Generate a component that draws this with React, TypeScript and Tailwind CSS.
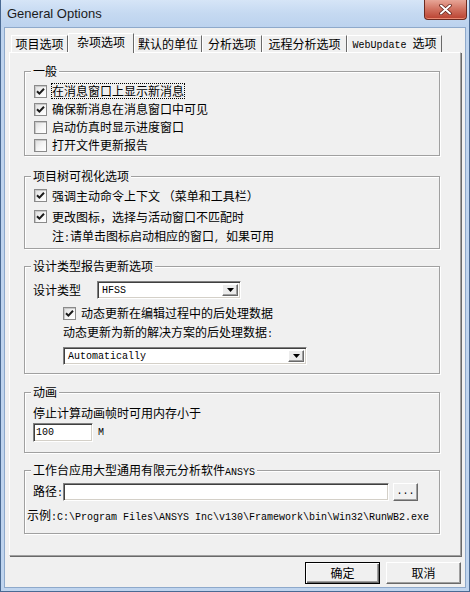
import React from 'react';

const cjk = "[font-family:'Noto_Sans_CJK_SC','Liberation_Sans',sans-serif]";
const mono = "[font-family:'Liberation_Mono',monospace]";

// Classic 13px checkbox
function Check({ checked }: { checked?: boolean }) {
  return (
    <span className="w-[13px] h-[13px] shrink-0 flex items-center justify-center border border-[#8a8a8a] bg-gradient-to-br from-[#dcdcdc] via-[#f4f4f4] to-white shadow-[inset_1px_1px_0_#c8c8c8]">
      {checked && (
        <svg width="9" height="9" viewBox="0 0 9 9">
          <path d="M1 4.2 L3.4 6.6 L8 1.8" stroke="#1a1a1a" strokeWidth="2" fill="none" />
        </svg>
      )}
    </span>
  );
}

function CheckRow({ checked, children, focus }: { checked?: boolean; children: React.ReactNode; focus?: boolean }) {
  return (
    <div className="flex items-center gap-[5px] h-[18px] pl-[9px]">
      <Check checked={checked} />
      <span className={`leading-[14px] ${focus ? 'outline outline-1 outline-dotted outline-black' : ''}`}>{children}</span>
    </div>
  );
}

function Group({ title, className, children }: { title: React.ReactNode; className: string; children: React.ReactNode }) {
  return (
    <div className={`relative ml-[14px] w-[416px] border border-[#a0a0a0] shadow-[inset_1px_1px_0_#fff,1px_1px_0_#fff] ${className}`}>
      <span className="absolute -top-[9px] left-[6px] px-[2px] bg-[#f0f0f0] leading-[16px] whitespace-nowrap">{title}</span>
      {children}
    </div>
  );
}

function DropArrow() {
  return (
    <span className="w-[16px] h-full shrink-0 flex items-center justify-center bg-[#ececec] border-t border-l border-t-white border-l-white border-r border-b border-r-[#696969] border-b-[#696969] shadow-[inset_-1px_-1px_0_#a0a0a0]">
      <svg width="7" height="4" viewBox="0 0 7 4"><path d="M0 0 H7 L3.5 4 Z" fill="#000" /></svg>
    </span>
  );
}

function Combo({ value, className }: { value: string; className: string }) {
  return (
    <div className={`flex items-stretch bg-white border-t border-l border-t-[#808080] border-l-[#808080] border-b border-r border-b-white border-r-white shadow-[inset_1px_1px_0_#404040,inset_-1px_-1px_0_#d4d0c8] p-[2px] ${className}`}>
      <span className={`flex-1 flex items-center pl-[2px] text-[10px] text-black ${mono}`}>{value}</span>
      <DropArrow />
    </div>
  );
}

function Btn({ children, primary }: { children: React.ReactNode; primary?: boolean }) {
  return (
    <button
      type="button"
      className={`w-[75px] h-[22px] flex items-center justify-center bg-[#f0f0f0] text-[12px] leading-none ${
        primary
          ? 'border border-black shadow-[inset_1px_1px_0_#fff,inset_-1px_-1px_0_#696969,inset_-2px_-2px_0_#a0a0a0]'
          : 'border-t border-l border-t-white border-l-white border-r border-b border-r-[#696969] border-b-[#696969] shadow-[inset_-1px_-1px_0_#a0a0a0]'
      }`}
    >
      {children}
    </button>
  );
}

const TABS = [
  { label: '项目选项', w: 'w-[57px]' },
  { label: '杂项选项', w: 'w-[66px]', active: true },
  { label: '默认的单位', w: 'w-[68px]' },
  { label: '分析选项', w: 'w-[60px]' },
  { label: '远程分析选项', w: 'w-[85px]' },
  { label: 'WebUpdate', w: 'w-[95px]', mono: true },
];

export default function App() {
  return (
    <div className={`w-[470px] h-[592px] flex flex-col bg-[#bfd4ee] border-l border-r border-b border-[#4a6a93] text-[12px] text-black ${cjk}`}>
      {/* title bar */}
      <div className="h-[27px] shrink-0 flex justify-between bg-gradient-to-b from-[#d6e5f7] via-[#c5d9f1] to-[#bcd2ee]">
        <span className="pl-[6px] pt-[6px] text-[13px] leading-[16px] text-[#1b1b1b] [font-family:'Liberation_Sans',sans-serif]">General Options</span>
        <div className="mr-[2px] w-[43px] h-[20px] flex items-center justify-center rounded-b-[4px] border border-t-0 border-[#6b2a20] bg-gradient-to-b from-[#e7a597] via-[#d0705f] to-[#b9402f] shadow-[inset_0_-1px_0_#e98a73]">
          <svg width="13" height="11" viewBox="0 0 13 11">
            <path d="M2 1.5 L11 9.5 M11 1.5 L2 9.5" stroke="#5a1c14" strokeWidth="3.4" strokeLinecap="round" />
            <path d="M2 1.5 L11 9.5 M11 1.5 L2 9.5" stroke="#fff" strokeWidth="2" strokeLinecap="round" />
          </svg>
        </div>
      </div>

      {/* client area */}
      <div className="flex-1 mx-[3px] mb-[3px] bg-[#f0f0f0] border border-[#8ea9cb] pt-[5px] px-[4px]">
        {/* tab strip */}
        <div className="h-[19px] flex items-end">
          {TABS.map((t, i) => (
            <div
              key={t.label}
              className={`${t.w} ${i === 0 ? 'ml-[2px]' : ''} flex items-center justify-center bg-[#f0f0f0] border-t border-l border-t-white border-l-white border-r border-r-[#696969] ${
                t.active ? 'h-[20px] -mb-px relative z-10 pb-[3px]' : 'h-[17px]'
              }`}
            >
              {t.mono ? (
                <span className="leading-none whitespace-nowrap">
                  <span className={`text-[10px] ${mono}`}>WebUpdate </span>选项
                </span>
              ) : (
                <span className="leading-none whitespace-nowrap">{t.label}</span>
              )}
            </div>
          ))}
        </div>

        {/* tab panel */}
        <div className="h-[504px] flex flex-col border-t border-l border-t-white border-l-white border-r border-b border-r-[#a0a0a0] border-b-[#a0a0a0] shadow-[1px_1px_0_#696969]">
          <Group title="一般" className="mt-[18px] h-[85px] pt-[10px]">
            <CheckRow checked focus>在消息窗口上显示新消息</CheckRow>
            <CheckRow checked>确保新消息在消息窗口中可见</CheckRow>
            <CheckRow>启动仿真时显示进度窗口</CheckRow>
            <CheckRow>打开文件更新报告</CheckRow>
          </Group>

          <Group title="项目树可视化选项" className="mt-[20px] h-[73px] pt-[8px]">
            <div className="flex items-center gap-[5px] h-[21px] pl-[9px]">
              <Check checked />
              <span className="leading-[14px]">强调主动命令上下文 （菜单和工具栏）</span>
            </div>
            <div className="flex items-center gap-[5px] h-[21px] pl-[9px]">
              <Check checked />
              <span className="leading-[14px]">更改图标，选择与活动窗口不匹配时</span>
            </div>
            <div className="flex items-center h-[21px] pl-[27px]">
              <span className="leading-[14px]">注<span className={`text-[10px] ${mono}`}>:</span>请单击图标启动相应的窗口<span className={`text-[10px] ${mono}`}>, </span>如果可用</span>
            </div>
          </Group>

          <Group title="设计类型报告更新选项" className="mt-[17px] h-[108px] pt-[14px]">
            <div className="flex items-center h-[18px] pl-[8px] gap-[16px]">
              <span className="leading-[14px]">设计类型</span>
              <Combo value="HFSS" className="w-[144px] h-[18px]" />
            </div>
            <div className="mt-[5px] flex items-center gap-[5px] h-[18px] pl-[38px]">
              <Check checked />
              <span className="leading-[14px]">动态更新在编辑过程中的后处理数据</span>
            </div>
            <div className="mt-[2px] flex items-center h-[18px] pl-[38px]">
              <span className="leading-[14px]">动态更新为新的解决方案的后处理数据<span className={`text-[10px] ${mono}`}>:</span></span>
            </div>
            <div className="mt-[5px] pl-[38px]">
              <Combo value="Automatically" className="w-[244px] h-[18px]" />
            </div>
          </Group>

          <Group title="动画" className="mt-[18px] h-[61px] pt-[11px]">
            <div className="flex items-center h-[18px] pl-[8px]">
              <span className="leading-[14px]">停止计算动画帧时可用内存小于</span>
            </div>
            <div className="mt-[1px] flex items-center gap-[5px] pl-[8px]">
              <div className={`w-[60px] h-[19px] flex items-center pl-[2px] bg-white border-t border-l border-t-[#808080] border-l-[#808080] border-b border-r border-b-white border-r-white shadow-[inset_1px_1px_0_#404040,inset_-1px_-1px_0_#d4d0c8] text-[10px] ${mono}`}>
                100
              </div>
              <span className={`text-[10px] ${mono}`}>M</span>
            </div>
          </Group>

          <Group title={<>工作台应用大型通用有限元分析软件<span className={`text-[10px] ${mono}`}>ANSYS</span></>} className="mt-[17px] h-[64px] pt-[12px]">
            <div className="flex items-center h-[18px] pl-[8px]">
              <span className="w-[30px] shrink-0 whitespace-nowrap leading-[14px]">路径<span className={`text-[10px] ${mono}`}>:</span></span>
              <div className="w-[326px] shrink-0 h-[18px] bg-white border-t border-l border-t-[#808080] border-l-[#808080] border-b border-r border-b-white border-r-white shadow-[inset_1px_1px_0_#404040,inset_-1px_-1px_0_#d4d0c8]" />
              <button
                type="button"
                className={`ml-[4px] shrink-0 w-[25px] h-[18px] flex items-center justify-center bg-[#f0f0f0] border-t border-l border-t-white border-l-white border-r border-b border-r-[#696969] border-b-[#696969] shadow-[inset_-1px_-1px_0_#a0a0a0] text-[10px] leading-none ${mono}`}
              >
                ...
              </button>
            </div>
            <div className="mt-[6px] flex items-center h-[18px] pl-[2px]">
              <span className="leading-[14px] whitespace-nowrap">示例<span className={`text-[10px] ${mono}`}>:C:\Program Files\ANSYS Inc\v130\Framework\bin\Win32\RunWB2.exe</span></span>
            </div>
          </Group>
        </div>

        {/* dialog buttons */}
        <div className="mt-[6px] flex justify-end gap-[6px]">
          <Btn primary>确定</Btn>
          <Btn>取消</Btn>
        </div>
      </div>
    </div>
  );
}
